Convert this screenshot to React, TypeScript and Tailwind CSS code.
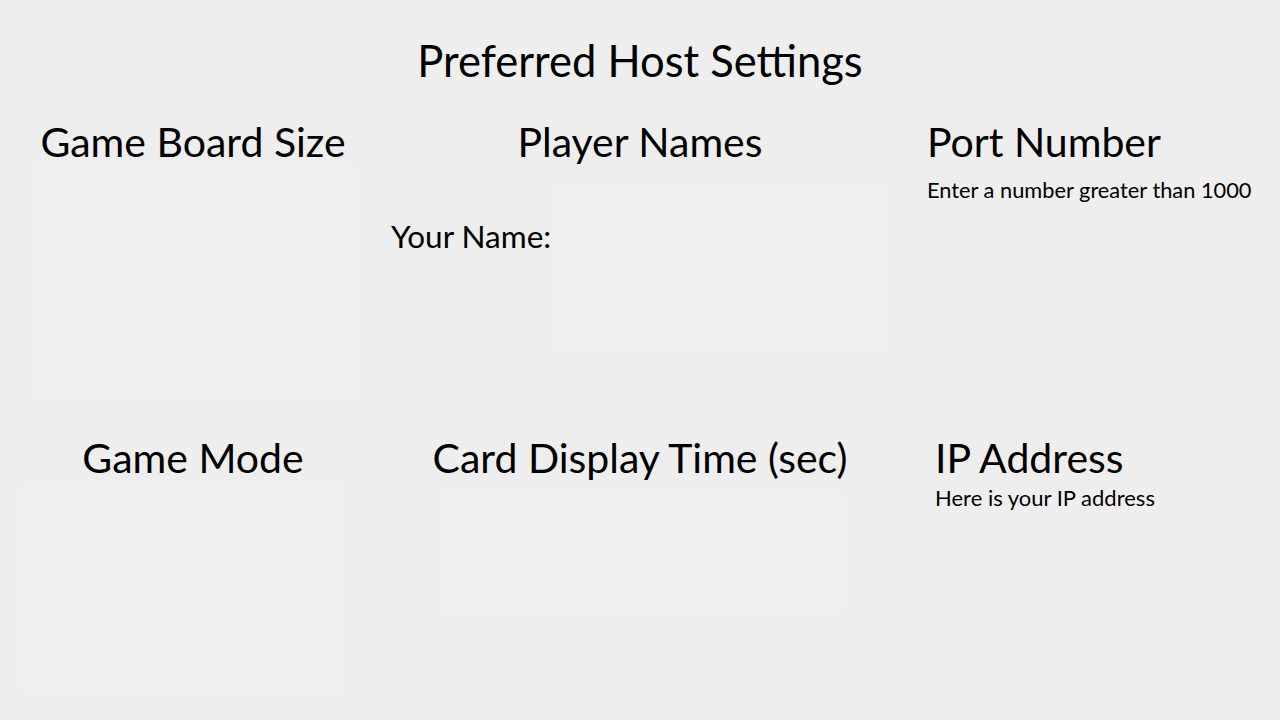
import React from 'react'

// faint input areas, barely lighter than the page
const Field: React.FC<{ className?: string }> = ({ className = '' }) => (
  <div className={`bg-[#efefef] ${className}`} />
)

export default function App() {
  return (
    <div className="min-h-screen w-full bg-[#eeeeee] text-black font-['Lato','Noto_Sans',sans-serif]">
      <div className="h-[120px] flex items-center justify-center">
        <h1 className="text-[43.5px] leading-[48px]">Preferred Host Settings</h1>
      </div>

      {/* Row 1 */}
      <div className="grid grid-cols-[386px_508px_386px] h-[316px]">
        <div className="flex flex-col items-center">
          <h2 className="text-[41px] leading-[44px]">Game Board Size</h2>
          <Field className="w-[325px] h-[235px] mt-[2px]" />
        </div>
        <div className="flex flex-col items-center">
          <h2 className="text-[41px] leading-[44px]">Player Names</h2>
          <div className="flex w-full pl-[5px] mt-[20px]">
            <span className="text-[31.5px] leading-[40px] mt-[32px]">Your Name:</span>
            <Field className="w-[338px] h-[165px]" />
          </div>
        </div>
        <div className="flex flex-col pl-[33px]">
          <h2 className="text-[41px] leading-[44px]">Port Number</h2>
          <p className="text-[21.8px] leading-[28px] mt-[12px]">Enter a number greater than 1000</p>
        </div>
      </div>

      {/* Row 2 */}
      <div className="grid grid-cols-[386px_508px_386px]">
        <div className="flex flex-col items-center">
          <h2 className="text-[41px] leading-[44px]">Game Mode</h2>
          <Field className="w-[318px] h-[212px] mt-[2px] -ml-[24px]" />
        </div>
        <div className="flex flex-col items-center">
          <h2 className="text-[41px] leading-[44px]">Card Display Time (sec)</h2>
          <Field className="w-[403px] h-[120px] mt-[10px]" />
        </div>
        <div className="flex flex-col pl-[41px]">
          <h2 className="text-[41px] leading-[44px]">IP Address</h2>
          <p className="text-[22px] leading-[28px] mt-[4px]">Here is your IP address</p>
        </div>
      </div>
    </div>
  )
}
